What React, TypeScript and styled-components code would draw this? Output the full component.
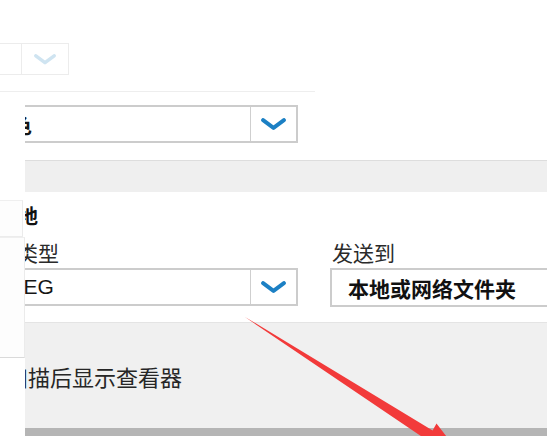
import React from "react";
import styled, { createGlobalStyle } from "styled-components";

const GlobalStyle = createGlobalStyle`
  html, body {
    margin: 0;
    padding: 0;
    background: #ffffff;
  }
  body {
    font-family: "Liberation Sans", "Noto Sans CJK SC", sans-serif;
    color: #1b1b1b;
  }
  * {
    box-sizing: border-box;
  }
`;

const Page = styled.div`
  position: relative;
  width: 551px;
  height: 436px;
  overflow: hidden;
  background: #ffffff;
`;

const TopStrip = styled.div`
  width: 315px;
  height: 92px;
  padding-top: 43px;
  border-bottom: 1px solid #eeeeee;
`;

const GhostSelect = styled.div`
  display: flex;
  justify-content: flex-end;
  width: 69px;
  height: 32px;
  border: 1px solid #ececec;
  border-left: none;
`;

const GhostChevronCell = styled.div`
  display: flex;
  align-items: center;
  justify-content: center;
  width: 47px;
  border-left: 1px solid #ececec;
  color: #cfe4f1;
`;

const Body = styled.div`
  display: grid;
  grid-template-columns: 25px 522px;
`;

const SideStrip = styled.div`
  display: flex;
  flex-direction: column;
  padding-top: 108px;
`;

const SideCard = styled.div<{ $h: number; $w: number; $edge: string }>`
  width: ${(p) => p.$w}px;
  height: ${(p) => p.$h}px;
  background: #fdfdfd;
  border-top: 1px solid #efefef;
  border-right: 1px solid #ebebeb;
  border-bottom: 1px solid ${(p) => p.$edge};
`;

const MainClip = styled.div`
  overflow: hidden;
`;

const MainInner = styled.div`
  display: flex;
  flex-direction: column;
  width: 572px;
  margin-left: -50px;
  padding-top: 13px;
`;

const SelectBox = styled.div<{ $pad: number; $bold?: boolean }>`
  display: flex;
  width: 323px;
  height: 38px;
  border: 2px solid #cccccc;
  background: #ffffff;
  font-size: 21px;
  font-weight: ${(p) => (p.$bold ? 700 : 400)};
  color: #151515;

  & > span {
    flex: 1;
    display: flex;
    align-items: center;
    padding-left: ${(p) => p.$pad}px;
    white-space: nowrap;
  }
`;

const ChevronCell = styled.div`
  display: flex;
  align-items: center;
  justify-content: center;
  width: 46px;
  border-left: 1px solid #cfcfcf;
  color: #1c80c4;
`;

const Band = styled.div`
  height: 32px;
  margin-top: 17px;
  background: #efefef;
  border-top: 1px solid #dddddd;
`;

const Heading = styled.div`
  margin-top: 11px;
  padding-left: 3px;
  height: 28px;
  line-height: 28px;
  font-size: 20px;
  font-weight: 700;
  color: #111111;
`;

const FieldRow = styled.div`
  display: grid;
  grid-template-columns: 323px 1fr;
  column-gap: 32px;
  margin-top: 9px;
`;

const Field = styled.div`
  display: flex;
  flex-direction: column;
`;

const Label = styled.div<{ $indent?: number }>`
  height: 28px;
  line-height: 28px;
  padding-left: ${(p) => p.$indent ?? 0}px;
  font-size: 21px;
  color: #2a2a2a;
  white-space: nowrap;
`;

const TextBox = styled.div`
  display: flex;
  align-items: center;
  height: 39px;
  padding-left: 16px;
  border: 2px solid #cccccc;
  border-right: none;
  font-size: 21px;
  font-weight: 700;
  color: #111111;
  white-space: nowrap;
`;

const Panel = styled.div`
  display: flex;
  align-items: center;
  height: 114px;
  margin-top: 15px;
  background: #f0f0f0;
  border-top: 1px solid #e4e4e4;
  border-bottom: 8px solid #b5b5b5;
`;

const CheckRow = styled.label`
  display: flex;
  align-items: center;
  gap: 11px;
  font-size: 22px;
  color: #262626;
  white-space: nowrap;
`;

const CheckBox = styled.span`
  width: 20px;
  height: 20px;
  border: 2px solid #555555;
  background: #ffffff;
`;

const ArrowLayer = styled.svg`
  position: absolute;
  left: 0;
  top: 0;
  pointer-events: none;
`;

const Chevron: React.FC<{ size?: number }> = ({ size = 25 }) => (
  <svg width={size} height={size / 2} viewBox="0 0 24 12">
    <path
      d="M2 2 L12 9.5 L22 2"
      fill="none"
      stroke="currentColor"
      strokeWidth="3.8"
      strokeLinecap="round"
      strokeLinejoin="round"
    />
  </svg>
);

const Select: React.FC<{ value: string; pad: number; bold?: boolean }> = ({
  value,
  pad,
  bold
}) => (
  <SelectBox $pad={pad} $bold={bold}>
    <span>{value}</span>
    <ChevronCell>
      <Chevron />
    </ChevronCell>
  </SelectBox>
);

export default function App() {
  return (
    <>
      <GlobalStyle />
      <Page>
        <TopStrip>
          <GhostSelect>
            <GhostChevronCell>
              <Chevron size={22} />
            </GhostChevronCell>
          </GhostSelect>
        </TopStrip>
        <Body>
          <SideStrip>
            <SideCard $w={23} $h={37} $edge="#ececec" />
            <SideCard $w={25} $h={121} $edge="#dadada" />
          </SideStrip>
          <MainClip>
            <MainInner>
              <Select value="彩色" pad={13} bold />
              <Band />
              <Heading>目的地</Heading>
              <FieldRow>
                <Field>
                  <Label>文件类型</Label>
                  <Select value="JPEG" pad={22} />
                </Field>
                <Field>
                  <Label $indent={2}>发送到</Label>
                  <TextBox>本地或网络文件夹</TextBox>
                </Field>
              </FieldRow>
              <Panel>
                <CheckRow>
                  <CheckBox />
                  扫描后显示查看器
                </CheckRow>
              </Panel>
            </MainInner>
          </MainClip>
        </Body>
        <ArrowLayer width="551" height="436" viewBox="0 0 551 436">
          <polygon
            fill="#f23a3a"
            points="244.2,316.6 245.8,317.4 432.6,430.4 436.5,423.5 463,458 421.5,446.5 426.2,439.6"
          />
        </ArrowLayer>
      </Page>
    </>
  );
}
